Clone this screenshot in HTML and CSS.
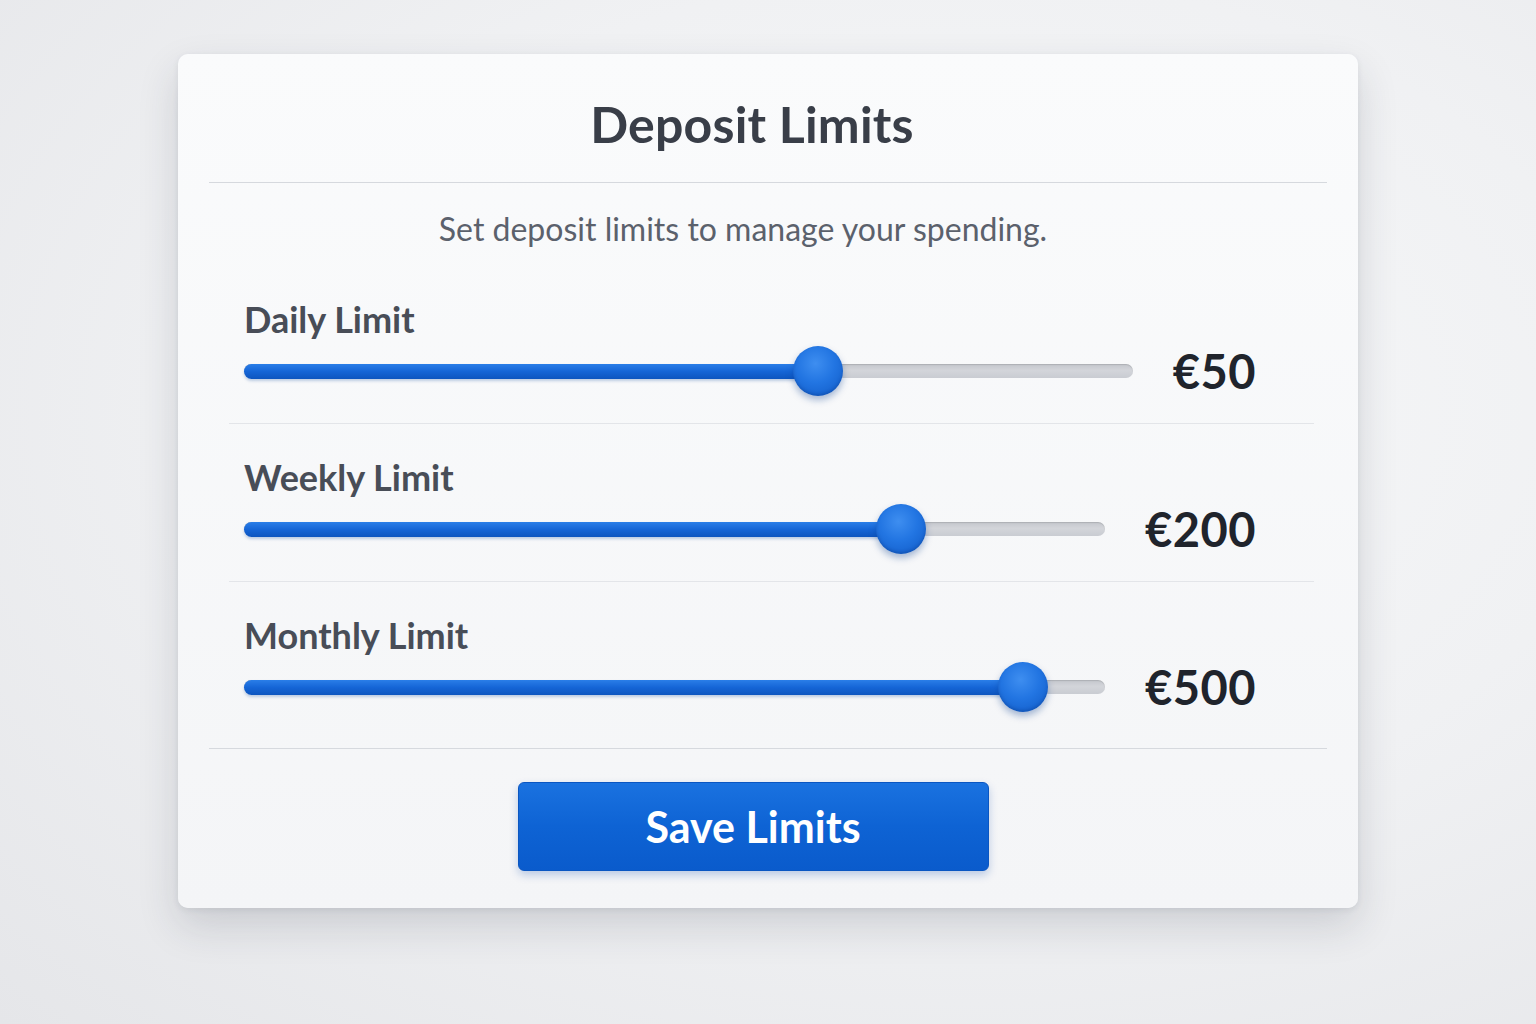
FILE: index.html
```html
<!DOCTYPE html>
<html lang="en">
<head>
<meta charset="utf-8">
<title>Deposit Limits</title>
<link rel="stylesheet" href="styles.css">
</head>
<body>
<main class="page">
  <section class="card">
    <header class="card-header">
      <h1 class="title">Deposit Limits</h1>
    </header>
    <p class="subtitle">Set deposit limits to manage your spending.</p>
    <div class="rows">
      <div class="row">
        <div class="label">Daily Limit</div>
        <div class="slider-line">
          <div class="track">
            <div class="fill" style="width:64.6%"></div>
            <div class="thumb" style="left:64.6%"></div>
          </div>
          <div class="value">€50</div>
        </div>
      </div>
      <div class="row">
        <div class="label">Weekly Limit</div>
        <div class="slider-line">
          <div class="track">
            <div class="fill" style="width:76.3%"></div>
            <div class="thumb" style="left:76.3%"></div>
          </div>
          <div class="value">€200</div>
        </div>
      </div>
      <div class="row row-last">
        <div class="label">Monthly Limit</div>
        <div class="slider-line">
          <div class="track">
            <div class="fill" style="width:90.5%"></div>
            <div class="thumb" style="left:90.5%"></div>
          </div>
          <div class="value">€500</div>
        </div>
      </div>
    </div>
    <footer class="card-footer">
      <button class="save-btn" type="button">Save Limits</button>
    </footer>
  </section>
</main>
</body>
</html>
```

FILE: styles.css
```css
* { box-sizing: border-box; }

html, body {
  margin: 0;
  padding: 0;
  width: 1536px;
  height: 1024px;
  overflow: hidden;
}

body {
  font-family: "Lato", "Open Sans", sans-serif;
  background: radial-gradient(ellipse at 62% 40%, #f7f8f9 0%, #f0f1f3 50%, #e5e6e9 100%);
}

.page {
  display: flex;
  justify-content: center;
  padding-top: 54px;
}

.card {
  width: 1180px;
  background: linear-gradient(180deg, #fafbfc 0%, #f4f5f7 100%);
  border-radius: 10px;
  padding: 0 31px 37px;
  box-shadow: 0 18px 40px rgba(40, 45, 60, 0.16), 0 2px 6px rgba(40, 45, 60, 0.08);
}

.card-header {
  height: 129px;
  display: flex;
  align-items: center;
  justify-content: center;
  border-bottom: 1px solid #d6d9de;
  padding-right: 32px;
}

.title {
  margin: 0;
  padding-top: 12px;
  font-size: 50px;
  font-weight: 700;
  color: #393e48;
  letter-spacing: 0.2px;
}

.subtitle {
  margin: 28px 0 0;
  text-align: center;
  font-size: 32px;
  line-height: 36px;
  color: #5b616c;
  padding-right: 50px;
}

.rows {
  margin: 19px 13px 0 20px;
}

.row {
  padding: 33px 58px 26px 15px;
  border-bottom: 1px solid #e3e5e9;
}

.row-last {
  border-bottom: none;
  padding-bottom: 35px;
}

.label {
  font-size: 36px;
  line-height: 40px;
  font-weight: 700;
  color: #484d57;
}

.slider-line {
  margin-top: 6px;
  height: 52px;
  display: flex;
  align-items: center;
  gap: 40px;
}

.track {
  position: relative;
  flex: 1;
  height: 14px;
  border-radius: 7px;
  background: linear-gradient(180deg, #c3c6cc 0%, #d3d5da 45%, #c9ccd2 100%);
  box-shadow: inset 0 1px 1px rgba(0, 0, 0, 0.12);
}

.fill {
  position: absolute;
  left: 0;
  top: -0.5px;
  height: 15px;
  border-radius: 8px;
  background: linear-gradient(180deg, #2a7ee8 0%, #1565d6 50%, #0d55bf 100%);
  box-shadow: 0 2px 3px rgba(13, 70, 160, 0.25);
}

.thumb {
  position: absolute;
  top: 50%;
  width: 50px;
  height: 50px;
  margin-left: -25px;
  margin-top: -25px;
  border-radius: 50%;
  background: radial-gradient(circle at 45% 35%, #3e8ef0 0%, #2275e2 45%, #1663cf 80%, #1056ba 100%);
  box-shadow: 0 4px 7px rgba(10, 60, 140, 0.35), inset 0 -2px 3px rgba(0, 40, 110, 0.25);
}

.value {
  font-size: 47px;
  font-weight: 700;
  color: #20242c;
  line-height: 52px;
  white-space: nowrap;
  letter-spacing: 0.5px;
}

.card-footer {
  border-top: 1px solid #d6d9de;
  padding-top: 33px;
  display: flex;
  justify-content: center;
}

.save-btn {
  width: 471px;
  height: 89px;
  border: 1px solid #0a56c2;
  border-radius: 6px;
  background: linear-gradient(180deg, #1a72e0 0%, #0e63d4 50%, #0a5bcc 100%);
  color: #ffffff;
  font-family: "Lato", "Open Sans", sans-serif;
  font-size: 43px;
  font-weight: 700;
  box-shadow: 0 4px 8px rgba(10, 70, 170, 0.25);
  margin-left: -30px;
}
```
